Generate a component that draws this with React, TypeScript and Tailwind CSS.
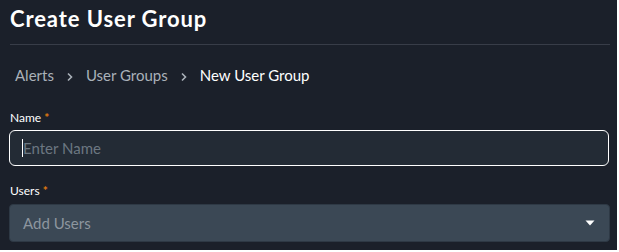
import React from "react";

export default function App() {
  return (
    <div className="w-[619px] h-[252px] bg-white">
      <div
        className="w-[617px] h-[250px] bg-[#1b202a] flex flex-col px-[9px]"
        style={{ fontFamily: "Lato, 'Noto Sans', sans-serif" }}
      >
        <h1 className="text-[22px] font-bold text-white leading-none pt-[8px] pl-[1px] h-[44px] tracking-[0.9px]">
          Create User Group
        </h1>
        <div className="h-px bg-[#383d48] w-[600px] ml-[1px]" />
        <nav className="flex items-center text-[15px] h-[60px] pl-[6px] pt-[1px]">
          <span className="text-[#aab1b9]">Alerts</span>
          <svg width="8" height="10" viewBox="0 0 8 10" className="mx-[12px] mt-[2px]">
            <path d="M2 1.5 L5.5 5 L2 8.5" fill="none" stroke="#aab1b9" strokeWidth="1.6" />
          </svg>
          <span className="text-[#aab1b9]">User Groups</span>
          <svg width="8" height="10" viewBox="0 0 8 10" className="mx-[12px] mt-[2px]">
            <path d="M2 1.5 L5.5 5 L2 8.5" fill="none" stroke="#aab1b9" strokeWidth="1.6" />
          </svg>
          <span className="text-white">New User Group</span>
        </nav>
        <label className="text-[12px] text-white leading-none pl-[1px] pt-[7px]">
          Name <span className="text-[#e07a10] font-bold">*</span>
        </label>
        <div className="mt-[6px] h-[36px] w-[600px] rounded-[6px] border border-white bg-[#232b35] flex items-center pl-[12px]">
          <div className="w-px h-[18px] bg-white" />
          <span className="text-[15px] text-[#6c7781]">Enter Name</span>
        </div>
        <label className="text-[12px] text-white leading-none pl-[1px] mt-[19px]">
          Users <span className="text-[#e07a10] font-bold">*</span>
        </label>
        <div className="mt-[7px] h-[38px] w-[601px] rounded-[4px] border border-[#2e3945] bg-[#3b4855] flex items-center justify-between pl-[13px] pr-[14px]">
          <span className="text-[15px] text-[#8d969f]">Add Users</span>
          <svg width="10" height="6" viewBox="0 0 10 6">
            <path d="M0.5 0.5 L9.5 0.5 L5 5.5 Z" fill="white" />
          </svg>
        </div>
      </div>
    </div>
  );
}
